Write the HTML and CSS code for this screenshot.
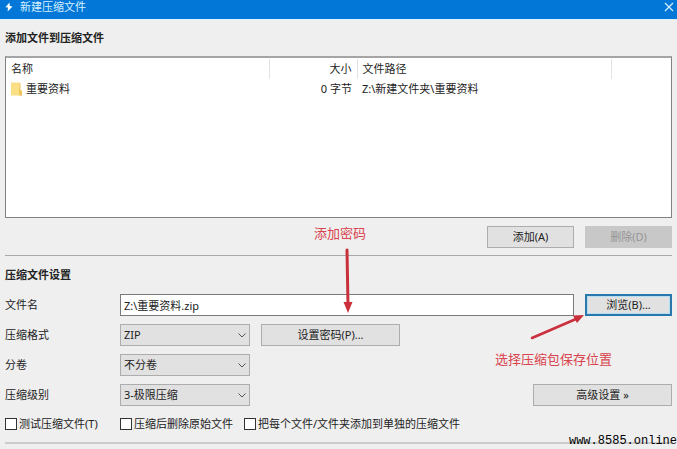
FILE: index.html
```html
<!DOCTYPE html>
<html lang="zh-CN">

<head>
  <meta charset="UTF-8">
  <meta name="viewport" content="width=device-width, initial-scale=1.0">
  <title>新建压缩文件</title>
  <link rel="stylesheet" href="styles.css">
</head>

<body>
  <header class="titlebar">
    <svg class="logo" viewBox="0 0 8 10" width="8" height="10">
      <path d="M4.5 0.5 L0.5 5.2 L3 5.6 L2.6 9.5 L7.5 4.4 L4.8 4 Z" fill="#fff" />
    </svg>
    <span class="caption">新建压缩文件</span>
    <button type="button" class="close" aria-label="关闭">
      <svg viewBox="0 0 10 10" width="10" height="10">
        <path d="M1 1 L9 9 M9 1 L1 9" stroke="#d5f1ff" stroke-width="1.2" fill="none" />
      </svg>
    </button>
  </header>

  <main class="dialog">
    <section class="files">
      <h2>添加文件到压缩文件</h2>
      <div class="list">
        <table>
          <thead>
            <tr>
              <th class="name">名称</th>
              <th class="size">大小</th>
              <th class="path">文件路径</th>
              <th></th>
            </tr>
          </thead>
          <tbody>
            <tr>
              <td>
                <div class="file">
                  <svg viewBox="0 0 11 14" width="11" height="14">
                    <path d="M0 0.5 H8.5 V8 H11 V13.5 H0 Z" fill="#fbdf84" />
                    <path d="M8.5 0.5 L9.5 1.5 V8.5 L11 9.5 V13.5 H8 V9 Z" fill="#efc65b" />
                  </svg>
                  <span>重要资料</span>
                </div>
              </td>
              <td class="size">0 字节</td>
              <td>Z:\新建文件夹\重要资料</td>
              <td></td>
            </tr>
          </tbody>
        </table>
      </div>
      <div class="actions">
        <button type="button" class="btn">添加(A)</button>
        <button type="button" class="btn" disabled>删除(D)</button>
      </div>
    </section>

    <section class="settings">
      <h2>压缩文件设置</h2>
      <div class="row">
        <label for="filename">文件名</label>
        <input type="text" id="filename" class="text" value="Z:\重要资料.zip">
        <button type="button" class="btn focused">浏览(B)...</button>
      </div>
      <div class="row">
        <label for="format">压缩格式</label>
        <div class="select">
          <select id="format">
            <option>ZIP</option>
          </select>
          <svg viewBox="0 0 8 5" width="8" height="5"><path d="M0.5 0.5 L4 4 L7.5 0.5" /></svg>
        </div>
        <button type="button" class="btn wide">设置密码(P)...</button>
      </div>
      <div class="row">
        <label for="volume">分卷</label>
        <div class="select">
          <select id="volume">
            <option>不分卷</option>
          </select>
          <svg viewBox="0 0 8 5" width="8" height="5"><path d="M0.5 0.5 L4 4 L7.5 0.5" /></svg>
        </div>
      </div>
      <div class="row">
        <label for="level">压缩级别</label>
        <div class="select">
          <select id="level">
            <option>3-极限压缩</option>
          </select>
          <svg viewBox="0 0 8 5" width="8" height="5"><path d="M0.5 0.5 L4 4 L7.5 0.5" /></svg>
        </div>
        <button type="button" class="btn wide advanced">高级设置 »</button>
      </div>
      <div class="checks">
        <label><input type="checkbox">测试压缩文件(T)</label>
        <label><input type="checkbox">压缩后删除原始文件</label>
        <label><input type="checkbox">把每个文件/文件夹添加到单独的压缩文件</label>
      </div>
    </section>
  </main>

  <!-- notes drawn over the dialog -->
  <div class="note note-password">添加密码</div>
  <svg class="arrow arrow-password" viewBox="0 0 10 66" width="10" height="66">
    <path d="M4 2 L5 57" stroke="#c9303c" stroke-width="3" stroke-linecap="round" />
    <path d="M0.5 54 H9.5 L5 65 Z" fill="#c9303c" />
  </svg>
  <div class="note note-browse">选择压缩包保存位置</div>
  <svg class="arrow arrow-browse" viewBox="0 0 56 26" width="56" height="26">
    <path d="M2 24 L46 5" stroke="#c9303c" stroke-width="2.5" stroke-linecap="round" />
    <path d="M43 1.5 L54 1 L47 9 Z" fill="#c9303c" />
  </svg>
  <div class="watermark">www.8585.online</div>
</body>

</html>
```

FILE: styles.css
```css
* {
  box-sizing: border-box;
}

body {
  position: relative;
  margin: 0;
  background: #efefef;
  color: #222;
  font-family: "Noto Sans", "Noto Sans CJK SC", sans-serif;
  font-size: 11px;
  line-height: 16px;
}

button,
input,
select {
  font: inherit;
  color: inherit;
}

.titlebar {
  display: flex;
  align-items: center;
  gap: 7px;
  padding: 0 3px 5px 5px;
  background: #0277d7;
  border-bottom: 1px solid #d8f3ff;
  color: #d5f1ff;
  line-height: 14px;
}

.close {
  display: flex;
  margin-left: auto;
  padding: 0;
  border: none;
  background: none;
}

.dialog {
  padding: 0 5px;
}

h2 {
  margin: 0;
  font-size: 11px;
  font-weight: bold;
}

.files {
  padding: 10px 0 7px;
  border-bottom: 1px solid #a8a8a8;
}

.list {
  height: 162px;
  margin: 10px 0 8px;
  padding-top: 1px;
  border: 1px solid #828282;
  border-top: 2px solid #a5a5a5;
  background: #fff;
}

.list table {
  width: 100%;
  table-layout: fixed;
  border-collapse: collapse;
}

.list th,
.list td {
  height: 20px;
  padding: 0 5px;
  text-align: left;
  font-weight: normal;
}

.list th {
  border-right: 1px solid #e3e3e3;
}

.list th:last-child {
  border-right: none;
}

.list .name {
  width: 263px;
}

.list .size {
  width: 88px;
  text-align: right;
}

.list .path {
  width: 254px;
}

.file {
  display: flex;
  align-items: center;
  gap: 4px;
}

.actions {
  display: flex;
  justify-content: flex-end;
  gap: 11px;
}

.btn {
  flex: none;
  width: 87px;
  height: 22px;
  padding: 0;
  border: 1px solid #adadad;
  background: #e1e1e1;
  text-align: center;
}

.btn:disabled {
  border-color: #c8c8c8;
  background: #c8c8c8;
  color: #969696;
}

.btn.focused {
  border: 2px solid #2878ab;
  box-shadow: inset 0 0 0 1px #b5def3;
}

.btn.wide {
  width: 139px;
}

.btn.advanced {
  margin-left: auto;
}

.settings {
  display: flex;
  flex-direction: column;
  gap: 8px;
  padding: 11px 0 10px;
  border-bottom: 2px solid #cbcbcb;
}

.settings h2 {
  padding-bottom: 3px;
}

.row {
  display: flex;
  align-items: center;
  gap: 11px;
}

.row label {
  width: 104px;
}

.text {
  flex: 1;
  min-width: 0;
  height: 22px;
  padding: 0 3px;
  border: 1px solid #7a7a7a;
  background: #fff;
}

.select {
  display: grid;
  align-items: center;
  width: 130px;
}

.select select,
.select svg {
  grid-area: 1 / 1;
}

.select select {
  height: 22px;
  padding: 0 3px;
  border: 1px solid #adadad;
  border-radius: 0;
  background: #e1e1e1;
  appearance: none;
}

.select svg {
  justify-self: end;
  margin-right: 4px;
  fill: none;
  stroke: #555;
  pointer-events: none;
}

.checks {
  display: grid;
  grid-template-columns: 115px 124px auto;
  padding-top: 2px;
}

.checks label {
  display: flex;
  align-items: center;
  gap: 2px;
}

.checks input {
  width: 12px;
  height: 12px;
  margin: 0;
  border: 1px solid #333;
  background: #fff;
  appearance: none;
}

.checks input:checked {
  background: #0277d7;
}

.note {
  position: absolute;
  color: #d9434d;
  font-size: 13px;
  line-height: 18px;
}

.note-password {
  top: 224px;
  left: 314px;
}

.note-browse {
  top: 350px;
  left: 495px;
}

.arrow {
  position: absolute;
}

.arrow-password {
  top: 248px;
  left: 343px;
}

.arrow-browse {
  top: 314px;
  left: 530px;
}

.watermark {
  position: absolute;
  top: 434px;
  right: 0;
  color: #000;
  font-family: "Liberation Mono", monospace;
  font-size: 12px;
  line-height: 14px;
}
```
